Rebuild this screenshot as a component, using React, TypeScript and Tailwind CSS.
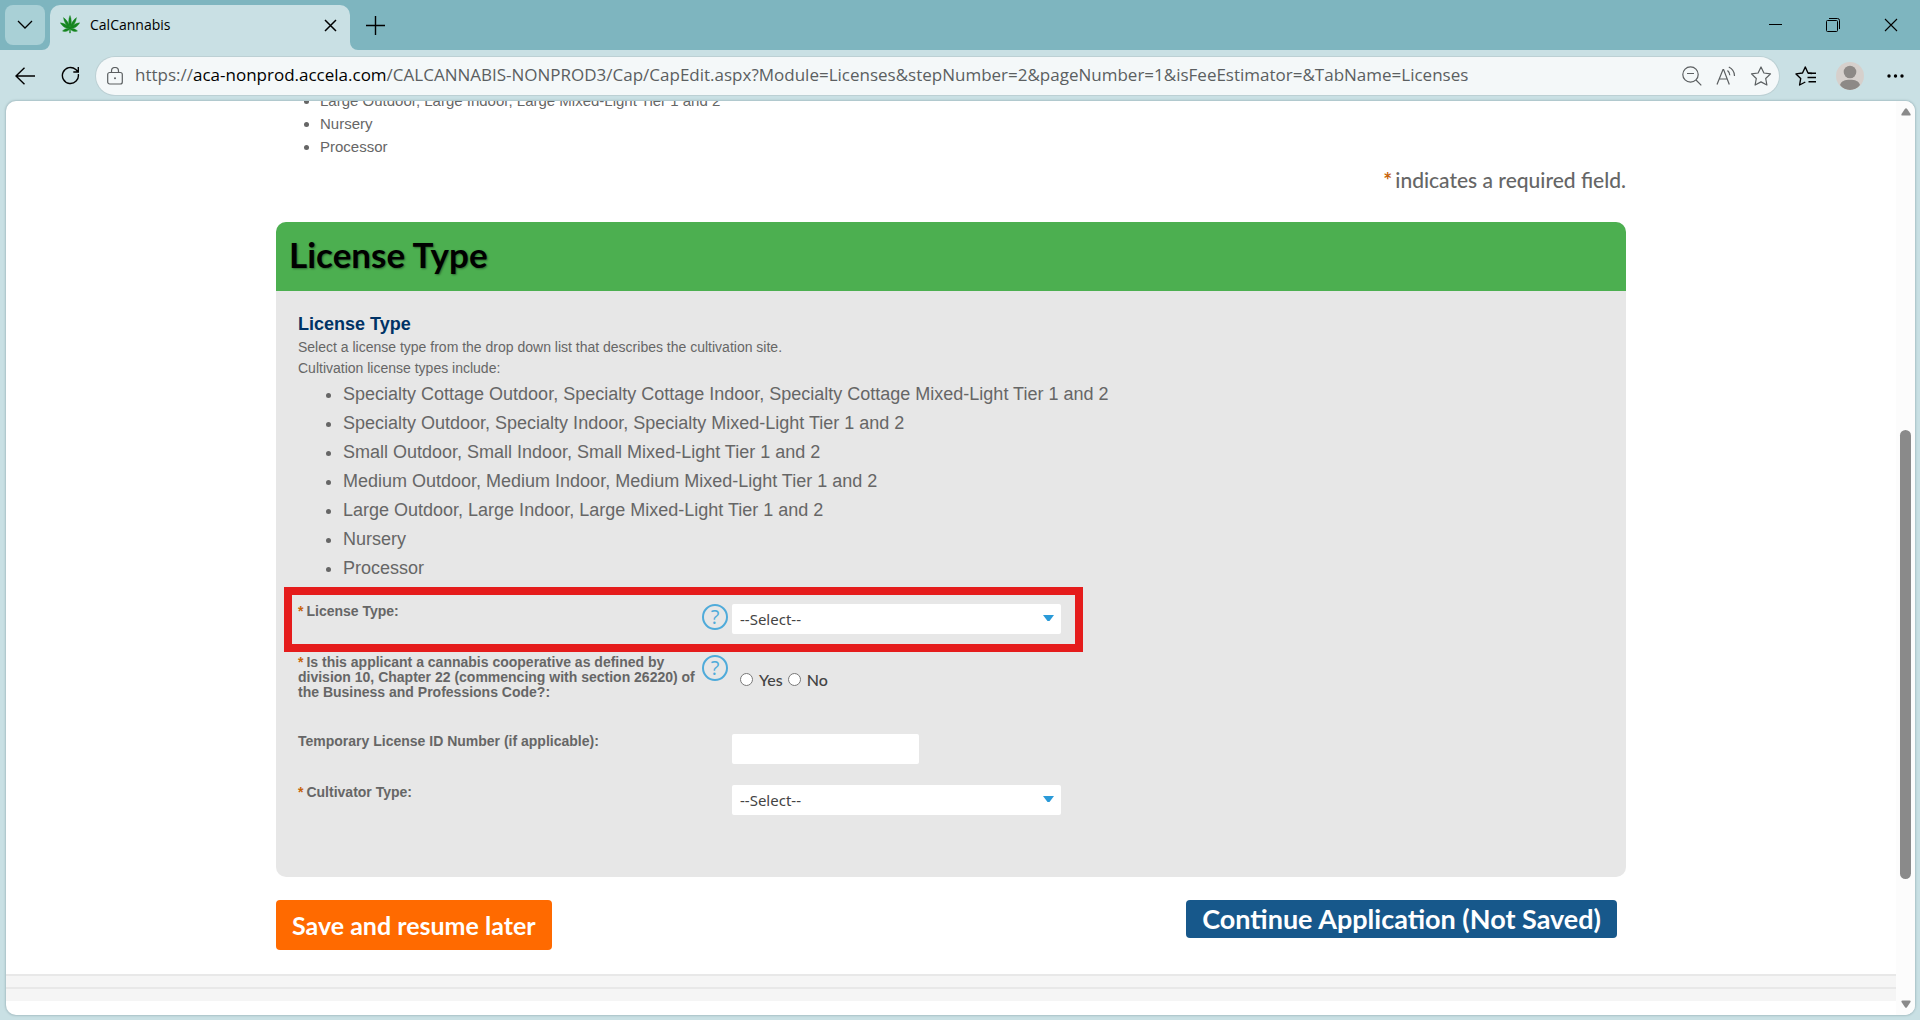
import { useState } from "react";

const licenseTypes = [
  "Specialty Cottage Outdoor, Specialty Cottage Indoor, Specialty Cottage Mixed-Light Tier 1 and 2",
  "Specialty Outdoor, Specialty Indoor, Specialty Mixed-Light Tier 1 and 2",
  "Small Outdoor, Small Indoor, Small Mixed-Light Tier 1 and 2",
  "Medium Outdoor, Medium Indoor, Medium Mixed-Light Tier 1 and 2",
  "Large Outdoor, Large Indoor, Large Mixed-Light Tier 1 and 2",
  "Nursery",
  "Processor",
];

function LeafIcon() {
  return (
    <svg width="20" height="20" viewBox="0 0 20 20" fill="#15851f" stroke="#15851f" strokeWidth=".4" aria-hidden="true">
      <path d="M10 0.500C8.400 4 8.100 8.500 9.900 13h.2C11.900 8.500 11.600 4 10 .5z" />
      <path d="M3.500 2.600C4 6.600 6 10.500 9.700 13.400l.3-.6C9.200 8.600 6.800 5 3.500 2.600z" />
      <path d="M16.500 2.600C16 6.600 14 10.500 10.300 13.400l-.3-.6C10.800 8.600 13.200 5 16.500 2.600z" />
      <path d="M.3 7.800c1.800 3.400 5 5.700 9.400 6l.1-.7C7.500 9.900 4.300 8.300 .3 7.800z" />
      <path d="M19.700 7.800c-1.800 3.400-5 5.700-9.400 6l-.1-.7c2.300-3.200 5.500-4.800 9.500-5.300z" />
      <path d="M2.500 15.900c2.700 1.200 5.400.6 7.300-1.800l-.2-.6c-2.700-.3-5.300.5-7.100 2.400z" />
      <path d="M17.500 15.900c-2.700 1.200-5.400.6-7.300-1.800l.2-.6c2.700-.3 5.300.5 7.100 2.400z" />
      <path d="M9.700 13h.6l.2 5h-1z" />
    </svg>
  );
}

function TabStrip() {
  return (
    <header className="flex h-[50px] shrink-0 bg-[#7eb5bf] pl-[5px] text-black">
      <button aria-label="Tab actions" className="mt-[5px] flex size-10 items-center justify-center rounded-lg bg-[#a9d0d6]">
        <svg width="16" height="10" viewBox="0 0 16 10" fill="none" stroke="currentColor" strokeWidth="1.3">
          <path d="M1 1l7 7 7-7" />
        </svg>
      </button>

      <div className="relative mt-[5px] ml-[5px] flex h-[45px] w-[300px] items-center rounded-t-[10px] bg-[#c9e0e4] pr-[13px] pb-[13px] pl-[10px] pt-2">
        <svg className="absolute bottom-0 -left-2" width="8" height="8" fill="#c9e0e4"><path d="M8 0v8H0a8 8 0 0 0 8-8z" /></svg>
        <svg className="absolute -right-2 bottom-0" width="8" height="8" fill="#c9e0e4"><path d="M0 0v8h8a8 8 0 0 1-8-8z" /></svg>
        <LeafIcon />
        <span className="ml-[10px] flex-1 font-['Open_Sans','Noto_Sans',sans-serif] text-sm leading-6">CalCannabis</span>
        <button aria-label="Close tab">
          <svg width="13" height="13" viewBox="0 0 13 13" fill="none" stroke="currentColor" strokeWidth="1.5">
            <path d="M1 1l11 11M12 1L1 12" />
          </svg>
        </button>
      </div>

      <button aria-label="New tab" className="ml-4 flex w-[19px] items-center">
        <svg width="19" height="19" viewBox="0 0 19 19" fill="none" stroke="currentColor" strokeWidth="1.4">
          <path d="M9.500 0v19M0 9.500h19" />
        </svg>
      </button>

      <div className="ml-auto flex items-center">
        <button aria-label="Minimize" className="flex w-[58px] justify-center">
          <svg width="13" height="13" stroke="currentColor" strokeWidth="1"><path d="M0 5.500h13" /></svg>
        </button>
        <button aria-label="Restore" className="flex w-[58px] justify-center">
          <svg width="14" height="14" viewBox="0 0 14 14" fill="none" stroke="currentColor" strokeWidth="1">
            <rect x=".5" y="2.500" width="11" height="11" rx="1" />
            <path d="M3 .5h8.500a2 2 0 0 1 2 2V11" />
          </svg>
        </button>
        <button aria-label="Close" className="flex w-[58px] justify-center">
          <svg width="14" height="14" viewBox="0 0 14 14" fill="none" stroke="currentColor" strokeWidth="1.100">
            <path d="M1 1l12 12M13 1L1 13" />
          </svg>
        </button>
      </div>
    </header>
  );
}

function Toolbar() {
  return (
    <nav className="flex h-[51px] shrink-0 items-center pr-4 pl-[15px] text-black">
      <button aria-label="Back">
        <svg width="20" height="18" viewBox="0 0 20 18" fill="none" stroke="currentColor" strokeWidth="1.4">
          <path d="M20 9H1M9.500 .7L1 9l8.500 8.300" />
        </svg>
      </button>
      <button aria-label="Refresh" className="ml-[26px]">
        <svg width="19" height="19" viewBox="0 0 19 19" fill="none" stroke="currentColor" strokeWidth="1.4">
          <path d="M17.300 8.200A8 8 0 1 1 14.800 3.600L17 5.800M17.300 1v5h-5" />
        </svg>
      </button>

      <div className="ml-4 flex h-[38px] flex-1 items-center rounded-full bg-[#f4f8f9] pr-[7px] pl-[11px] text-[#5b5f61] shadow-[0_0_0_1px_#bcd0d4]">
        <svg width="16" height="18" viewBox="0 0 16 18" fill="none" stroke="currentColor" strokeWidth="1.200">
          <rect x=".7" y="5.500" width="14.600" height="11.500" rx="2" />
          <path d="M4.500 5.500V4a3.500 3.500 0 0 1 7 0v1.500" />
          <circle cx="8" cy="11.300" r="1" fill="currentColor" stroke="none" />
        </svg>
        <p className="ml-3 flex-1 truncate pb-[2px] font-['Open_Sans','Noto_Sans',sans-serif] text-[17px] leading-6">
          https://<span className="text-black">aca-nonprod.accela.com</span>
          /CALCANNABIS-NONPROD3/Cap/CapEdit.aspx?Module=Licenses&amp;stepNumber=2&amp;pageNumber=1&amp;isFeeEstimator=&amp;TabName=Licenses
        </p>
        <div className="flex items-center gap-[14px]">
          <button aria-label="Zoom out">
            <svg width="20" height="20" viewBox="0 0 20 20" fill="none" stroke="currentColor" strokeWidth="1.200">
              <circle cx="8.500" cy="8.500" r="7.700" />
              <path d="M5 7.500h7M14 14l5.300 5.300" />
            </svg>
          </button>
          <button aria-label="Read aloud">
            <svg width="20" height="20" viewBox="0 0 20 20" fill="none" stroke="currentColor" strokeWidth="1.200">
              <path d="M1 18.500L7 3.500h.6l5.700 15M3.200 13h8.200M11.500 4.500c1.500 1.200 2.300 2.800 2.300 4.800M12.800 1c3.500 1.700 5.700 5 5.700 9" />
            </svg>
          </button>
          <button aria-label="Add to favorites">
            <svg width="22" height="20" viewBox="0 0 22 20" fill="none" stroke="currentColor" strokeWidth="1.200" strokeLinejoin="round">
              <path d="M11 1l2.900 6 6.600.9-4.800 4.600 1.200 6.500L11 15.900 5.100 19l1.200-6.500L1.500 7.900 8.100 7z" />
            </svg>
          </button>
        </div>
      </div>

      <button aria-label="Favorites" className="ml-4">
        <svg width="21" height="20" viewBox="0 0 21 20" fill="none" stroke="currentColor" strokeWidth="1.400" strokeLinejoin="round">
          <path d="M17 7.500l-4-.5L10.300 1 7.500 7 1 7.900l4.700 4.600L4.600 19l5.700-3" />
          <path d="M13 7.200h8M12.500 11.500H21M13.500 15.700H21" />
        </svg>
      </button>
      <button aria-label="Profile" className="ml-5 flex size-7 items-end justify-center overflow-hidden rounded-full bg-[#d6d0cc]">
        <svg width="28" height="28" viewBox="0 0 28 28" fill="#8d8986">
          <circle cx="14" cy="10" r="6.300" />
          <path d="M4 23c1-4 5-5.300 10-5.300S23 19 24 23c-2.500 3.300-6 5-10 5s-7.500-1.700-10-5z" />
        </svg>
      </button>
      <button aria-label="Settings and more" className="ml-[23px]">
        <svg width="17" height="4" viewBox="0 0 17 4" fill="currentColor">
          <circle cx="2" cy="2" r="1.700" />
          <circle cx="8.500" cy="2" r="1.700" />
          <circle cx="15" cy="2" r="1.700" />
        </svg>
      </button>
    </nav>
  );
}

function ScrollRail() {
  return (
    <div className="flex w-[19px] shrink-0 flex-col items-center bg-[#fcfcfc] py-[7px]">
      <svg width="10" height="8" fill="#8a8a8a"><path d="M4 .7Q5-.3 6 .7L9.500 6Q10 7.500 8.500 7.500h-7Q0 7.500 .5 6z" /></svg>
      <div className="flex w-full flex-1 flex-col items-center">
        <div className="flex-[314]" />
        <div className="w-[11px] flex-[450] rounded-full bg-[#8a8a8a]" />
        <div className="flex-[121]" />
      </div>
      <svg width="10" height="8" fill="#8a8a8a"><path d="M4 7.300Q5 8.300 6 7.300L9.500 2Q10 .5 8.500 .5h-7Q0 .5 .5 2z" /></svg>
    </div>
  );
}

function Required() {
  return <span className="mr-[3px] font-bold text-[#c8640a]">*</span>;
}

function HelpButton() {
  return (
    <button
      type="button"
      aria-label="Help"
      className="flex size-[26px] items-center justify-center justify-self-center rounded-full border-2 border-[#4fabda] font-['Open_Sans',sans-serif] text-xl leading-none font-normal text-[#4fabda]"
    >
      ?
    </button>
  );
}

function SelectBox({ id }: { id: string }) {
  return (
    <div className="relative w-[329px]">
      <select id={id} className="block h-[30px] w-full appearance-none rounded-xs bg-white px-2 font-['Noto_Sans','Open_Sans',sans-serif] text-[15px] leading-5 font-normal text-[#444]">
        <option>--Select--</option>
      </select>
      <svg className="pointer-events-none absolute top-[11px] right-[7px]" width="11" height="7" fill="#2a9ad8">
        <path d="M0 0h11L6.500 6h-2z" />
      </svg>
    </div>
  );
}

export default function App() {
  const [coop, setCoop] = useState("");

  return (
    <div className="flex h-screen flex-col bg-[#c9e0e4] font-['Liberation_Sans',Arial,sans-serif] text-[#666]">
      <TabStrip />
      <Toolbar />

      <div className="mr-[5px] mb-[5px] ml-[6px] flex min-h-0 flex-1 overflow-hidden rounded-[10px] bg-white shadow-[0_0_2px_1px_#a9c1c6]">
        <main className="min-w-0 flex-1 overflow-hidden">
          <div className="mx-auto -mt-3 max-w-[1350px]">
            <ul className="list-disc pl-11 text-[15px] leading-[23px]">
              {licenseTypes.slice(4).map((type) => (
                <li key={type}>{type}</li>
              ))}
            </ul>

            <p className="mt-[6px] text-right font-[Lato,sans-serif] text-[21px] leading-8 font-medium">
              <Required />
              indicates a required field.
            </p>

            {/* License type panel */}
            <section className="mt-[26px] overflow-hidden rounded-[10px] bg-[#e7e7e7] pb-[62px]">
              <h1 className="bg-[#4caf50] px-[13px] pt-3 pb-[17px] font-[Lato,sans-serif] text-[35px] leading-10 font-bold text-black [text-shadow:1px_1px_2px_rgb(0_0_0/0.4)]">
                License Type
              </h1>

              <div className="px-[22px] pt-[21px]">
                <h2 className="mb-px text-lg leading-6 font-bold text-[#003366]">License Type</h2>
                <p className="text-sm leading-[21px]">Select a license type from the drop down list that describes the cultivation site.</p>
                <p className="text-sm leading-[21px]">Cultivation license types include:</p>
                <ul className="list-disc pt-px pl-[45px] text-lg leading-[29px]">
                  {licenseTypes.map((type) => (
                    <li key={type}>{type}</li>
                  ))}
                </ul>
              </div>

              <form className="px-2 pt-1 text-sm leading-[15px] font-bold">
                <div className="grid w-[799px] max-w-full grid-cols-[400px_34px_auto] border-8 border-[#e51c1c] pt-[9px] pb-[10px] pl-[6px]">
                  <label htmlFor="license-type"><Required />License Type:</label>
                  <HelpButton />
                  <SelectBox id="license-type" />
                </div>

                <div className="px-[14px]">
                  <div className="mt-[3px] grid grid-cols-[400px_34px_auto]">
                    <span id="coop-label">
                      <Required />Is this applicant a cannabis cooperative as defined by division 10, Chapter 22 (commencing with section 26220) of the Business and Professions Code?:
                    </span>
                    <HelpButton />
                    <div role="radiogroup" aria-labelledby="coop-label" className="flex items-center gap-[5px] pt-1 pl-2 font-[Lato,sans-serif] text-base leading-5 font-medium text-[#444]">
                      {["Yes", "No"].map((option) => (
                        <label key={option} className="flex items-center gap-[6px]">
                          <input
                            type="radio"
                            name="coop"
                            value={option}
                            checked={coop === option}
                            onChange={() => setCoop(option)}
                            className="size-[13px]"
                          />
                          {option}
                        </label>
                      ))}
                    </div>
                  </div>

                  <div className="mt-[34px] grid grid-cols-[434px_auto]">
                    <label htmlFor="temp-id">Temporary License ID Number (if applicable):</label>
                    <input id="temp-id" type="text" className="h-[30px] w-[187px] rounded-xs bg-white px-2 font-normal" />
                  </div>

                  <div className="mt-[21px] grid grid-cols-[434px_auto]">
                    <label htmlFor="cultivator-type"><Required />Cultivator Type:</label>
                    <SelectBox id="cultivator-type" />
                  </div>
                </div>
              </form>
            </section>

            {/* Actions */}
            <div className="mt-[23px] flex items-start justify-between pr-[9px] font-[Lato,sans-serif] font-bold text-white">
              <button className="rounded bg-[#ff6a00] px-4 py-[9px] text-[25px] leading-8">Save and resume later</button>
              <button className="rounded bg-[#17588b] px-4 py-[3px] text-[27px] leading-8">Continue Application (Not Saved)</button>
            </div>
          </div>

          <footer className="mt-6 border-t-2 border-[#e8e8e8] bg-[#f5f5f5] pt-[11px]">
            <div className="h-[14px] border-t-2 border-[#e8e8e8]" />
          </footer>
        </main>
        <ScrollRail />
      </div>
    </div>
  );
}
